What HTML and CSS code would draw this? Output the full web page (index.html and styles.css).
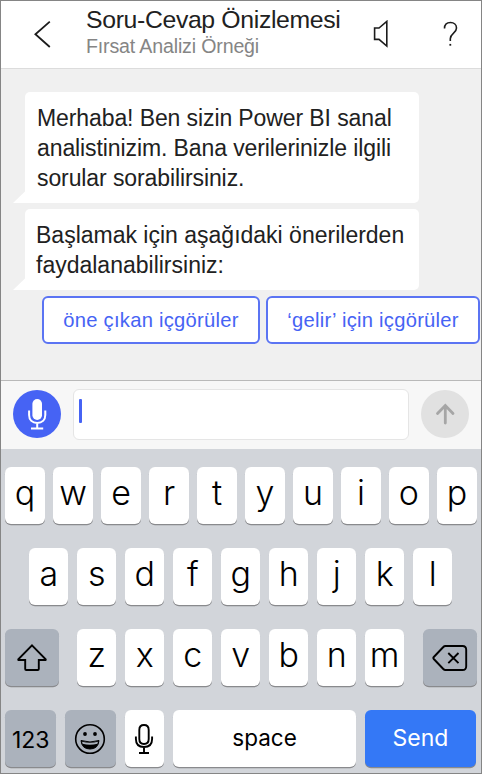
FILE: index.html
```html
<!DOCTYPE html>
<html lang="tr">
<head>
<meta charset="utf-8">
<title>Soru-Cevap Önizlemesi</title>
<link rel="stylesheet" href="styles.css">
</head>
<body>
<div class="phone">
  <header class="header">
    <svg class="back" width="18" height="28" viewBox="0 0 18 28"><path d="M16.8 1.6 L2.4 14.2 L16.8 27"/></svg>
    <div class="titles">
      <h1 class="title">Soru-Cevap Önizlemesi</h1>
      <div class="subtitle">Fırsat Analizi Örneği</div>
    </div>
    <svg class="speaker" width="16" height="28" viewBox="0 0 16 28"><path d="M1.6 8 H6 L13.8 1.4 V26 L6 19.4 H1.6 Z"/></svg>
    <svg class="help" width="16" height="28" viewBox="0 0 16 28"><path d="M1.5 8.5 C1.5 4.3 4 2.5 7.5 2.5 C11 2.5 13.5 4.8 13.5 7.9 C13.5 13.4 7.3 13.4 7.3 18.7 V21"/><path class="dot" d="M6.4 23.9 H8.2 V25.7 H6.4 Z"/></svg>
  </header>
  <main class="chat">
    <div class="bubble first">Merhaba! Ben sizin Power BI sanal<br>analistinizim. Bana verilerinizle ilgili<br>sorular sorabilirsiniz.</div>
    <div class="bubble second">Başlamak için aşağıdaki önerilerden<br>faydalanabilirsiniz:</div>
    <div class="chips">
      <button class="chip one">öne çıkan içgörüler</button>
      <button class="chip two">‘gelir’ için içgörüler</button>
    </div>
  </main>
  <section class="composer">
    <div class="round mic">
      <svg width="48" height="48" viewBox="0 0 48 48"><rect x="19.4" y="9" width="9.6" height="21" rx="4.8" fill="#fff"/><path d="M16.1 20.5 V25 C16.1 30 19.3 33 24.2 33 C29.1 33 32.3 30 32.3 25 V20.5 M24.2 33 V38.5 M18 38.5 H30.2" fill="none" stroke="#fff" stroke-width="2"/></svg>
    </div>
    <div class="field"><span class="caret"></span></div>
    <div class="round submit">
      <svg width="48" height="48" viewBox="0 0 48 48"><path d="M24.3 33 V16 M16.5 23.5 L24.3 15.5 L32 23.5" fill="none" stroke="#a6a6a6" stroke-width="2.8" stroke-linecap="round"/></svg>
    </div>
  </section>
  <section class="keyboard">
    <div class="row">
      <span class="key">q</span><span class="key">w</span><span class="key">e</span><span class="key">r</span><span class="key">t</span><span class="key">y</span><span class="key">u</span><span class="key">i</span><span class="key">o</span><span class="key">p</span>
    </div>
    <div class="row middle">
      <span class="key">a</span><span class="key">s</span><span class="key">d</span><span class="key">f</span><span class="key">g</span><span class="key">h</span><span class="key">j</span><span class="key">k</span><span class="key">l</span>
    </div>
    <div class="row spread">
      <span class="key gray wide"><svg width="32" height="30" viewBox="0 0 32 30"><path d="M16 2.3 L29.7 16.3 Q30 17 29.2 17 H22.8 V26 Q22.8 27 21.8 27 H10.2 Q9.2 27 9.2 26 V17 H2.8 Q2 17 2.3 16.3 Z"/></svg></span>
      <span class="group"><span class="key">z</span><span class="key">x</span><span class="key">c</span><span class="key">v</span><span class="key">b</span><span class="key">n</span><span class="key">m</span></span>
      <span class="key gray wide"><svg width="36" height="28" viewBox="0 0 36 28"><path d="M13.5 2 H30.5 Q34.2 2 34.2 5.8 V22.2 Q34.2 26 30.5 26 H13.5 Q12.2 26 11.3 25 L1.8 15 Q.9 14 1.8 13 L11.3 3 Q12.2 2 13.5 2 Z M16.3 9 L26.5 19.2 M26.5 9 L16.3 19.2"/></svg></span>
    </div>
    <div class="row">
      <span class="key gray numeric">123</span>
      <span class="key gray emoji"><svg width="32" height="32" viewBox="0 0 32 32"><circle cx="16" cy="16" r="14.3"/><circle class="solid" cx="11" cy="11" r="1.9"/><circle class="solid" cx="21" cy="11" r="1.9"/><path class="smile" d="M7 17.5 Q16 20.5 25 17.5 Q24.2 26 16 26 Q7.8 26 7 17.5 Z"/><path class="teeth" d="M8 18.7 Q16 20.9 24 18.7 L23.4 20.8 Q16 22.8 8.6 20.8 Z"/></svg></span>
      <span class="key"><svg width="20" height="32" viewBox="0 0 20 32"><path d="M10 2 Q14.7 2 14.7 7 V16 Q14.7 21 10 21 Q5.3 21 5.3 16 V7 Q5.3 2 10 2 Z M1.9 13.5 V16 Q1.9 24 10 24 Q18.1 24 18.1 16 V13.5 M10 24 V30 M5 30 H15"/></svg></span>
      <span class="key space">space</span>
      <span class="key send">Send</span>
    </div>
  </section>
</div>
</body>
</html>
```

FILE: styles.css
```css
* { box-sizing: border-box; }
body { margin: 0; font-family: "Liberation Sans", Arial, sans-serif; color: #212121; }
.phone { width: 482px; height: 774px; border: 1px solid #858585; display: flex; flex-direction: column; background: #f0f0f0; overflow: hidden; }
svg { display: block; flex: none; }

.header { height: 68px; flex: none; background: #fff; border-bottom: 1px solid #dcdcdc; display: flex; align-items: flex-start; }
.header svg { fill: none; stroke: #1c1c1c; stroke-width: 1.6; margin-top: 19px; }
.header .back { margin-left: 32px; stroke-width: 1.8; }
.header .help .dot { fill: #1c1c1c; stroke: none; }
.titles { margin-left: 35px; width: 286px; white-space: nowrap; }
.title { margin: 4px 0 0; font-size: 24.8px; font-weight: 400; line-height: 30px; letter-spacing: -.35px; }
.subtitle { margin-top: 0; font-size: 19.6px; line-height: 22px; letter-spacing: -.16px; color: #858585; }
.speaker { margin-left: 1px; }
.help { margin-left: 54px; }

.chat { height: 311px; flex: none; padding-top: 23px; }
.bubble { position: relative; margin-left: 24px; width: 394px; padding: 11px 0 0 12px; background: #fff; border-radius: 5px 5px 5px 0; font-size: 23px; letter-spacing: -.1px; line-height: 30px; white-space: nowrap; }
.bubble::before { content: ""; position: absolute; left: -12px; bottom: 0; width: 12.5px; height: 12px; background: #fff; clip-path: polygon(100% 0, 100% 100%, 0 100%); }
.first { height: 111px; }
.second { height: 81px; margin-top: 6px; padding-left: 11px; letter-spacing: 0; }
.chips { display: flex; gap: 6px; margin: 6px 0 0 41px; }
.chip { height: 48px; padding: 0 0 1px; border: 2px solid #5b74f3; border-radius: 6px; background: #fff; color: #4663f4; font: 20.2px/30px "Liberation Sans", Arial, sans-serif; letter-spacing: .25px; white-space: nowrap; flex: none; }
.one { width: 218px; }
.two { width: 214px; }

.composer { height: 69px; flex: none; display: flex; align-items: flex-start; padding: 8px 0 0 12px; background: #f7f7f7; border-top: 1px solid #b9b9b9; }
.round { width: 48px; height: 48px; flex: none; border-radius: 50%; margin-top: 1px; }
.mic { background: #4663f4; }
.submit { background: #e1e1e1; margin-left: 12px; }
.field { width: 336px; height: 51px; margin-left: 12px; padding: 9px 0 0 5px; border: 1px solid #e5e5e5; border-radius: 6px; background: #fff; }
.caret { display: block; width: 3px; height: 24px; border-radius: 1px; background: #4663f4; }

.keyboard { flex: 1; background: #d2d5da; padding: 18px 4.3px 0 4.4px; display: flex; flex-direction: column; gap: 24px; font-family: Inter, "Liberation Sans", sans-serif; color: #000; }
.row, .group { display: flex; gap: 8.7px; }
.middle { justify-content: center; padding-right: .6px; }
.spread { gap: 17.7px; }
.key { width: 39.3px; height: 57px; flex: none; display: flex; justify-content: center; align-items: center; padding-bottom: 5px; border-radius: 6px; background: #fff; box-shadow: 0 1.3px 0 #898a8d; font-size: 34px; font-weight: 350; line-height: 1; }
.key svg { fill: none; stroke: #000; stroke-width: 1.9; margin-top: 5px; }
.gray { background: #abb2bc; }
.wide { width: 54px; }
.wide:last-child { margin-left: .6px; }
.numeric { width: 50.8px; font-size: 23px; font-weight: 400; padding: 3px 0 0; }
.emoji { width: 51.2px; }
.emoji svg { stroke-width: 1.6; }
.emoji .solid { fill: #000; stroke: none; }
.emoji .smile { fill: #000; stroke-width: 1; }
.emoji .teeth { fill: #abb2bc; stroke: none; }
.space { width: 183.6px; font-size: 22.5px; font-weight: 400; padding: 0 0 1px; }
.send { width: 111px; background: #3478f6; color: #fff; font-size: 23px; font-weight: 400; padding: 0 0 1px; }
```
